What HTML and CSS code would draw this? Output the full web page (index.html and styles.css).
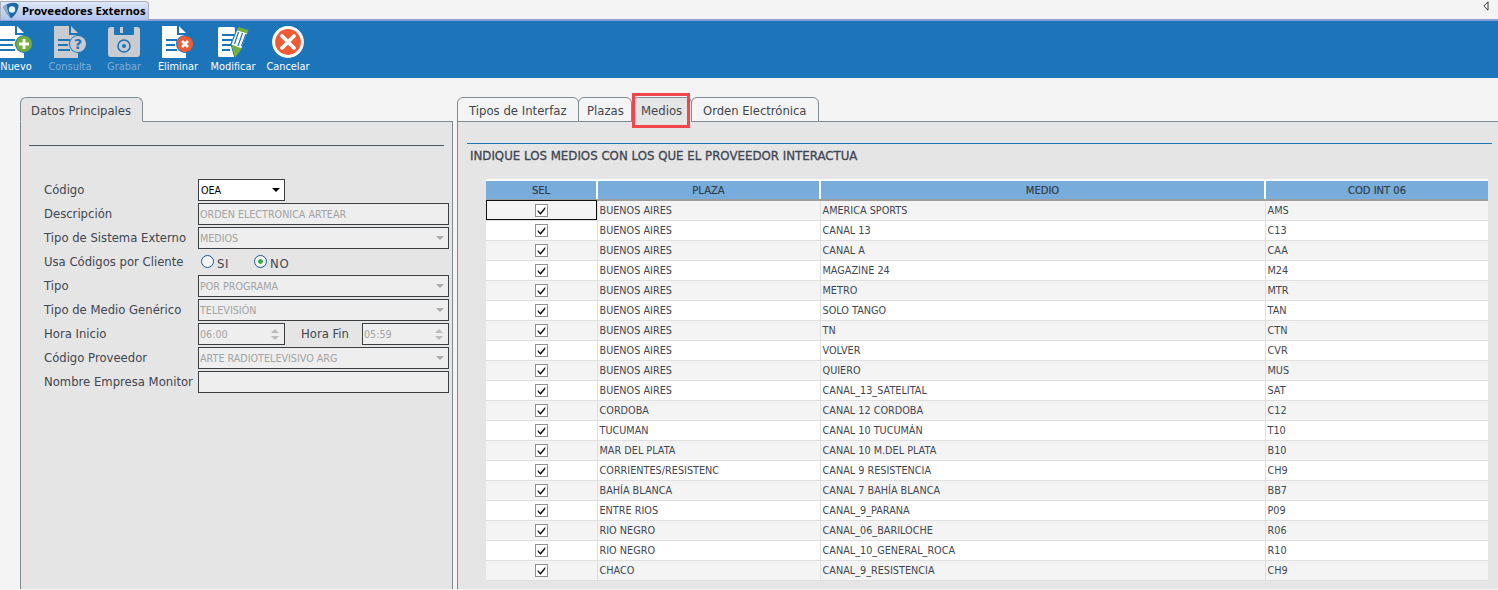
FILE: index.html
```html
<!DOCTYPE html>
<html lang="es">
<head>
<meta charset="utf-8">
<title>Proveedores Externos</title>
<link rel="stylesheet" href="styles.css">
</head>
<body>
<svg class="defs" width="0" height="0" aria-hidden="true">
  <symbol id="chk" viewBox="0 0 9 9"><path d="M1 4.5 L3.4 7 L8 1.5 L8 3 L3.6 8.4 L1 5.8 Z" fill="#000" stroke="#000" stroke-width=".5"/></symbol>
</svg>
<header class="titlebar">
  <div class="apptab">
    <svg class="applogo" viewBox="0 0 16 17"><path d="M0 5 Q6 0 13 1 Q16 2 15.5 5 Q14 12 8 16.5 Q3 12 0 5 Z" fill="#1a6aa3"/><path d="M0 5 Q2 3 4 2.5 Q4 9 8 16.5 Q3 12 0 5 Z" fill="#8fa9c4"/><circle cx="9" cy="7.5" r="3.2" fill="#e4f4fb"/></svg>
    <span>Proveedores Externos</span>
  </div>
  <svg class="collapse" viewBox="0 0 6 10"><path d="M5 .8 V9.2 L.8 5 Z" fill="#fff" stroke="#333"/></svg>
</header>
<nav class="toolbar">
  <button class="tool"><svg class="ico" viewBox="0 0 32 32"><path d="M0 0 H15 V9 H24 V32 H0 Z M17 0 L24 7 H17 Z" fill="#fff"/><path d="M0 14 H15 M0 19 H13 M0 24 H15" stroke="#1c75b9" stroke-width="2"/><circle cx="24" cy="18" r="9" fill="#1c75b9"/><circle cx="24" cy="18" r="8" fill="#74ae3c"/><path d="M24 13 V23 M19 18 H29" stroke="#fff" stroke-width="2.8"/></svg><span>Nuevo</span></button>
  <button class="tool off"><svg class="ico" viewBox="0 0 32 32"><path d="M0 0 H15 V9 H24 V32 H0 Z M17 0 L24 7 H17 Z" fill="#c8ccd0"/><path d="M4 14 H16 M4 19 H14 M4 24 H16" stroke="#1c75b9" stroke-width="2"/><circle cx="24" cy="18" r="9" fill="#1c75b9"/><circle cx="24" cy="18" r="8" fill="#c8ccd0"/><text x="24" y="23" class="q">?</text></svg><span>Consulta</span></button>
  <button class="tool off"><svg class="ico" viewBox="0 0 32 32"><path d="M3 1 H6 V8 Q6 9 7 9 H25 Q26 9 26 8 V1 H29 Q32 1 32 4 V28 Q32 31 29 31 H3 Q0 31 0 28 V4 Q0 1 3 1 Z" fill="#c8ccd0"/><rect x="12" y="1" width="3" height="6" fill="#c8ccd0"/><circle cx="16" cy="20" r="6" fill="none" stroke="#1c75b9" stroke-width="1.6"/><circle cx="16" cy="20" r="2" fill="#1c75b9"/></svg><span>Grabar</span></button>
  <button class="tool"><svg class="ico" viewBox="0 0 32 32"><path d="M0 0 H15 V9 H24 V32 H0 Z M17 0 L24 7 H17 Z" fill="#fff"/><path d="M4 14 H15 M4 19 H13 M4 24 H15" stroke="#1c75b9" stroke-width="2"/><circle cx="23" cy="18" r="9" fill="#1c75b9"/><circle cx="23" cy="18" r="8" fill="#ef5b35"/><path d="M20 15 L26 21 M26 15 L20 21" stroke="#fff" stroke-width="2.8"/></svg><span>Eliminar</span></button>
  <button class="tool wide"><svg class="ico" viewBox="0 0 32 32"><rect x="1" y="1" width="17" height="30" rx="1.5" fill="#fff"/><path d="M5 9 H17 M5 14 H15 M5 19 H14 M5 24 H13" stroke="#1c75b9" stroke-width="2"/><path d="M20 3 L31 6 L25 22 L18 32 L14 18 Z" fill="#fff" stroke="#1c75b9" stroke-width="1.2"/><path d="M21 1 L31.5 4 L30.5 7.5 L20 4.5 Z" fill="#74ae3c"/><path d="M14.5 18.5 L25 22.5 L18 31.5 Z" fill="#74ae3c"/><path d="M21.5 6 L17.5 18 M25.5 7 L21 20 M29 8 L24.5 20" stroke="#1c75b9" stroke-width="1.2"/></svg><span>Modificar</span></button>
  <button class="tool last"><svg class="ico" viewBox="0 0 32 32"><circle cx="16" cy="16" r="14.4" fill="#ef5b35" stroke="#fff" stroke-width="3"/><path d="M10 10 L22 22 M22 10 L10 22" stroke="#fff" stroke-width="3.8" stroke-linecap="round"/></svg><span>Cancelar</span></button>
</nav>
<main class="content">
  <section class="left">
    <div class="tabs"><span class="tab active">Datos Principales</span></div>
    <div class="panel lpanel">
      <hr class="rule">
      <form class="form">
        <label>Código</label>
        <div class="ctl sel"><span>OEA</span><i class="arrow"></i></div>
        <label>Descripción</label>
        <div class="ctl dis"><span>ORDEN ELECTRONICA ARTEAR</span></div>
        <label>Tipo de Sistema Externo</label>
        <div class="ctl dis"><span>MEDIOS</span><i class="arrow grey"></i></div>
        <label>Usa Códigos por Cliente</label>
        <div class="radios"><span class="radio"><i></i>SI</span><span class="radio on"><i></i>NO</span></div>
        <label>Tipo</label>
        <div class="ctl dis"><span>POR PROGRAMA</span><i class="arrow grey"></i></div>
        <label>Tipo de Medio Genérico</label>
        <div class="ctl dis"><span>TELEVISIÓN</span><i class="arrow grey"></i></div>
        <label>Hora Inicio</label>
        <div class="hours">
          <div class="ctl dis spin"><span>06:00</span><b class="sp"><i></i><i></i></b></div>
          <label>Hora Fin</label>
          <div class="ctl dis spin"><span>05:59</span><b class="sp"><i></i><i></i></b></div>
        </div>
        <label>Código Proveedor</label>
        <div class="ctl dis"><span>ARTE RADIOTELEVISIVO ARG</span><i class="arrow grey"></i></div>
        <label>Nombre Empresa Monitor</label>
        <div class="ctl dis"></div>
      </form>
    </div>
  </section>
  <section class="right">
    <div class="tabs">
      <span class="tab t1">Tipos de Interfaz</span><span class="tab t2">Plazas</span><span class="tab active t3">Medios<em class="mark"></em></span><span class="tab t4">Orden Electrónica</span>
    </div>
    <div class="panel rpanel">
      <h2>INDIQUE LOS MEDIOS CON LOS QUE EL PROVEEDOR INTERACTUA</h2>
      <table>
        <colgroup><col class="c1"><col class="c2"><col class="c3"><col class="c4"></colgroup>
        <thead><tr><th>SEL</th><th>PLAZA</th><th>MEDIO</th><th>COD INT 06</th></tr></thead>
        <tbody>
          <tr><td class="focus"><svg class="cb"><use href="#chk"/></svg></td><td>BUENOS AIRES</td><td>AMERICA SPORTS</td><td>AMS</td></tr>
          <tr><td><svg class="cb"><use href="#chk"/></svg></td><td>BUENOS AIRES</td><td>CANAL 13</td><td>C13</td></tr>
          <tr><td><svg class="cb"><use href="#chk"/></svg></td><td>BUENOS AIRES</td><td>CANAL A</td><td>CAA</td></tr>
          <tr><td><svg class="cb"><use href="#chk"/></svg></td><td>BUENOS AIRES</td><td>MAGAZINE 24</td><td>M24</td></tr>
          <tr><td><svg class="cb"><use href="#chk"/></svg></td><td>BUENOS AIRES</td><td>METRO</td><td>MTR</td></tr>
          <tr><td><svg class="cb"><use href="#chk"/></svg></td><td>BUENOS AIRES</td><td>SOLO TANGO</td><td>TAN</td></tr>
          <tr><td><svg class="cb"><use href="#chk"/></svg></td><td>BUENOS AIRES</td><td>TN</td><td>CTN</td></tr>
          <tr><td><svg class="cb"><use href="#chk"/></svg></td><td>BUENOS AIRES</td><td>VOLVER</td><td>CVR</td></tr>
          <tr><td><svg class="cb"><use href="#chk"/></svg></td><td>BUENOS AIRES</td><td>QUIERO</td><td>MUS</td></tr>
          <tr><td><svg class="cb"><use href="#chk"/></svg></td><td>BUENOS AIRES</td><td>CANAL_13_SATELITAL</td><td>SAT</td></tr>
          <tr><td><svg class="cb"><use href="#chk"/></svg></td><td>CORDOBA</td><td>CANAL 12 CORDOBA</td><td>C12</td></tr>
          <tr><td><svg class="cb"><use href="#chk"/></svg></td><td>TUCUMAN</td><td>CANAL 10 TUCUMÁN</td><td>T10</td></tr>
          <tr><td><svg class="cb"><use href="#chk"/></svg></td><td>MAR DEL PLATA</td><td>CANAL 10 M.DEL PLATA</td><td>B10</td></tr>
          <tr><td><svg class="cb"><use href="#chk"/></svg></td><td>CORRIENTES/RESISTENC</td><td>CANAL 9 RESISTENCIA</td><td>CH9</td></tr>
          <tr><td><svg class="cb"><use href="#chk"/></svg></td><td>BAHÍA BLANCA</td><td>CANAL 7 BAHÍA BLANCA</td><td>BB7</td></tr>
          <tr><td><svg class="cb"><use href="#chk"/></svg></td><td>ENTRE RIOS</td><td>CANAL_9_PARANA</td><td>P09</td></tr>
          <tr><td><svg class="cb"><use href="#chk"/></svg></td><td>RIO NEGRO</td><td>CANAL_06_BARILOCHE</td><td>R06</td></tr>
          <tr><td><svg class="cb"><use href="#chk"/></svg></td><td>RIO NEGRO</td><td>CANAL_10_GENERAL_ROCA</td><td>R10</td></tr>
          <tr><td><svg class="cb"><use href="#chk"/></svg></td><td>CHACO</td><td>CANAL_9_RESISTENCIA</td><td>CH9</td></tr>
        </tbody>
      </table>
    </div>
  </section>
</main>
</body>
</html>
```
FILE: styles.css
```css
* { box-sizing: border-box; }
html, body { margin: 0; height: 590px; overflow: hidden; }
body { background: #f4f4f4; font-family: "DejaVu Sans", "Noto Sans", sans-serif; font-size: 12px; color: #3f4650; }
.defs { display: block; height: 0; }

.titlebar { height: 21px; display: flex; justify-content: space-between; border-bottom: 2px solid #8e9ed0; background: #f4f4f4; }
.apptab { width: 149px; height: 19px; margin-top: 1px; display: flex; align-items: center; gap: 3px; padding: 0 0 2px 2px; border: 1px solid #a9b0bd; border-bottom: 0; border-radius: 0 4px 0 0; background: linear-gradient(#dfe8fa, #aec1ea); font-family: "Noto Sans", sans-serif; font-weight: 700; font-size: 11.4px; color: #000; white-space: nowrap; }
.applogo { width: 16px; height: 17px; flex: none; }
.collapse { width: 6px; height: 10px; margin: 1px 9px 0 0; }

.toolbar { height: 57px; background: #1c75b9; display: flex; margin-left: -11px; padding-top: 5px; }
.tool { width: 54px; padding: 0; border: 0; background: none; display: flex; flex-direction: column; align-items: center; font-family: "DejaVu Sans", sans-serif; font-size: 9.8px; color: #fff; }
.tool span { line-height: 12px; margin-top: 3px; white-space: nowrap; }
.tool.off { color: #7eaed6; }
.tool.wide { width: 56px; }
.ico { width: 32px; height: 32px; display: block; flex: none; }
.q { font: 700 14px "DejaVu Sans", sans-serif; text-anchor: middle; fill: #1c75b9; }

.content { display: flex; padding: 19px 0 0 20px; gap: 4px; }
.left { width: 433px; flex: none; }
.right { flex: 1; min-width: 0; }

.tabs { height: 25px; display: flex; align-items: flex-end; position: relative; z-index: 1; margin-bottom: -1px; }
.tab { height: 25px; padding: 2px 11px 0; display: flex; align-items: center; border: 1px solid #7f8b92; border-radius: 6px 6px 0 0; background: #f4f4f4; font-size: 11.7px; white-space: nowrap; position: relative; }
.tab.active { background: #e5e5e5; border-bottom-color: #e5e5e5; }
.left .tab { width: 123px; padding-left: 10px; font-size: 11.6px; }
.t1 { width: 122px; }
.t2 { width: 54px; margin-left: -1px; padding-left: 8px; }
.t3 { width: 60px; padding-left: 8px; padding-right: 0; }
.t4 { width: 128px; margin-left: -1px; font-size: 11.6px; }
.mark { position: absolute; left: -1px; top: -5px; width: 58px; height: 35px; border: 3px solid #f0464c; }

.panel { height: 468px; background: #e5e5e5; border: 1px solid #7f8b92; border-bottom: 0; }
.rule { height: 1px; border: 0; background: #4d5a66; margin: 23px 8px 0; }
.form { display: grid; grid-template-columns: 154px 251px; grid-auto-rows: 22px; row-gap: 2px; align-items: center; margin: 33px 0 0 23px; }
.form label { white-space: nowrap; font-size: 11.65px; }
.ctl { height: 22px; display: flex; align-items: center; justify-content: space-between; padding: 0 1px; border: 1px solid #3c3f42; background: #eeeeee; font-size: 9.6px; }
.ctl.sel { width: 87px; padding-left: 2px; background: #fff; color: #000; }
.ctl.dis { color: #a3a3a3; }
.arrow { width: 0; height: 0; border: 4px solid transparent; border-top: 4px solid #000; border-bottom: 0; margin: 0 3px 0 0; }
.arrow.grey { border-top-color: #a9a9a9; }
.radios { display: flex; padding-left: 3px; gap: 25px; }
.radio { display: flex; align-items: center; gap: 3px; font-size: 11.7px; letter-spacing: .6px; padding-top: 3px; }
.radio i { width: 13px; height: 13px; border: 1px solid #1c5a8a; border-radius: 50%; background: #f4f4f4; display: block; margin-top: -4px; }
.radio.on i { background: radial-gradient(circle, #3aa850 0 2px, #f4f4f4 2.6px); }
.hours { display: grid; grid-template-columns: 87px 77px 87px; align-items: center; }
.hours label { padding-left: 16px; }
.spin { padding-right: 2px; }
.sp { display: flex; flex-direction: column; gap: 3px; margin-right: 3px; }
.sp i { width: 0; height: 0; border: 4px solid transparent; border-bottom: 4px solid #bcbcbc; border-top: 0; display: block; }
.sp i + i { border-top: 4px solid #bcbcbc; border-bottom: 0; }

.rpanel { position: relative; border-right: 0; padding: 21px 0 0 9px; }
.rpanel h2 { margin: 0 6px 0 0; border-top: 1px solid #1c75b9; padding: 4px 0 0 3px; font-size: 11.8px; font-weight: 400; -webkit-text-stroke: .3px #3f4650; line-height: 16px; height: 36px; color: #3f4650; white-space: nowrap; }
table { border-collapse: collapse; table-layout: fixed; width: 1002px; margin-left: 19px; font-size: 9.7px; }
.c1 { width: 111px; } .c2 { width: 223px; } .c3 { width: 445px; } .c4 { width: 223px; }
th { height: 20px; padding: 0; background: #78acda; border-top: 2px solid #fff; border-left: 2px solid #fff; border-bottom: 2px solid #9d9d9d; font-weight: 400; font-size: 10px; color: #333e48; -webkit-text-stroke: .2px #333e48; }
th:first-child { border-left: 0; }
td { height: 20px; padding: 0 0 0 2px; border-left: 1px solid #e0e0e0; border-bottom: 1px solid #e0e0e0; white-space: nowrap; overflow: hidden; color: #3f4650; }
td:first-child { border-left: 0; text-align: center; padding: 0; }
tbody tr:nth-child(odd) td { background: #f4f4f4; }
tbody tr:nth-child(even) td { background: #fff; }
td.focus { outline: 1px solid #111; outline-offset: -1px; }
.cb { width: 13px; height: 13px; display: inline-block; vertical-align: middle; border: 1px solid #8f8f8f; background: #fff; padding: 1px; }
```
